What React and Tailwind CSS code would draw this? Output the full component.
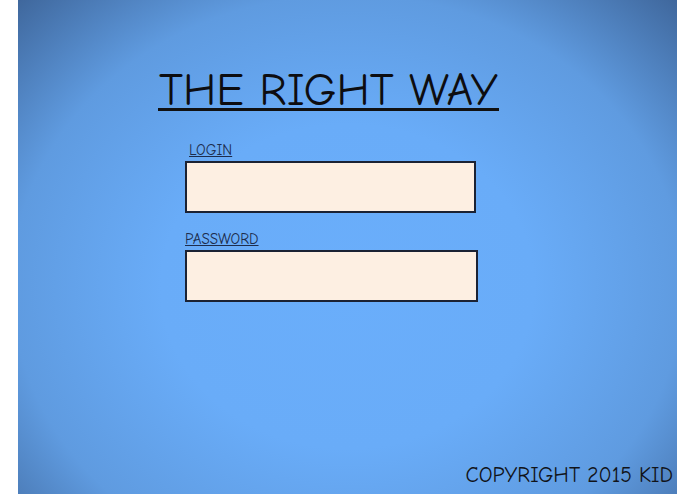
import React from 'react'

const hand = "font-['Comic_Sans_MS','Comic_Neue','Open_Sans',sans-serif]"

const Field = ({ label, indent, width }) => (
    <div className='flex flex-col'>
        <label className={`${hand} text-[15px] leading-[15px] text-[#1d2d4d] underline underline-offset-1 ${indent}`}>{label}</label>
        <input
            type='text'
            className={`mt-[3px] h-[52px] ${width} bg-[#fdefe2] border-2 border-[#1b2233] outline-none`}
        />
    </div>
)

const App = () => {
    return (
        <div className='w-full h-[494px] bg-white px-[18px] flex'>
            <div className='flex-1 h-full flex flex-col bg-[radial-gradient(ellipse_at_50%_58%,#6aaefb_0%,#69acf8_40%,#5f9be0_72%,#3f679c_100%)]'>
                <div className='pl-[140px] pt-[73px]'>
                    <h1 className={`${hand} text-[46px] leading-[35px] text-[#0d0d10] border-b-[3px] border-[#111] inline-block px-[1px]`}>
                        THE RIGHT WAY
                    </h1>
                </div>
                <div className='pl-[167px] pt-[32px] flex flex-col gap-[19px]'>
                    <Field label='LOGIN' indent='pl-[4px]' width='w-[291px]' />
                    <Field label='PASSWORD' indent='' width='w-[293px]' />
                </div>
                <div className='mt-auto pb-[6px] pr-[4px] flex justify-end'>
                    <span className={`${hand} text-[21.5px] leading-[26px] text-[#111318]`}>COPYRIGHT 2015 KID</span>
                </div>
            </div>
        </div>
    )
}

export default App
